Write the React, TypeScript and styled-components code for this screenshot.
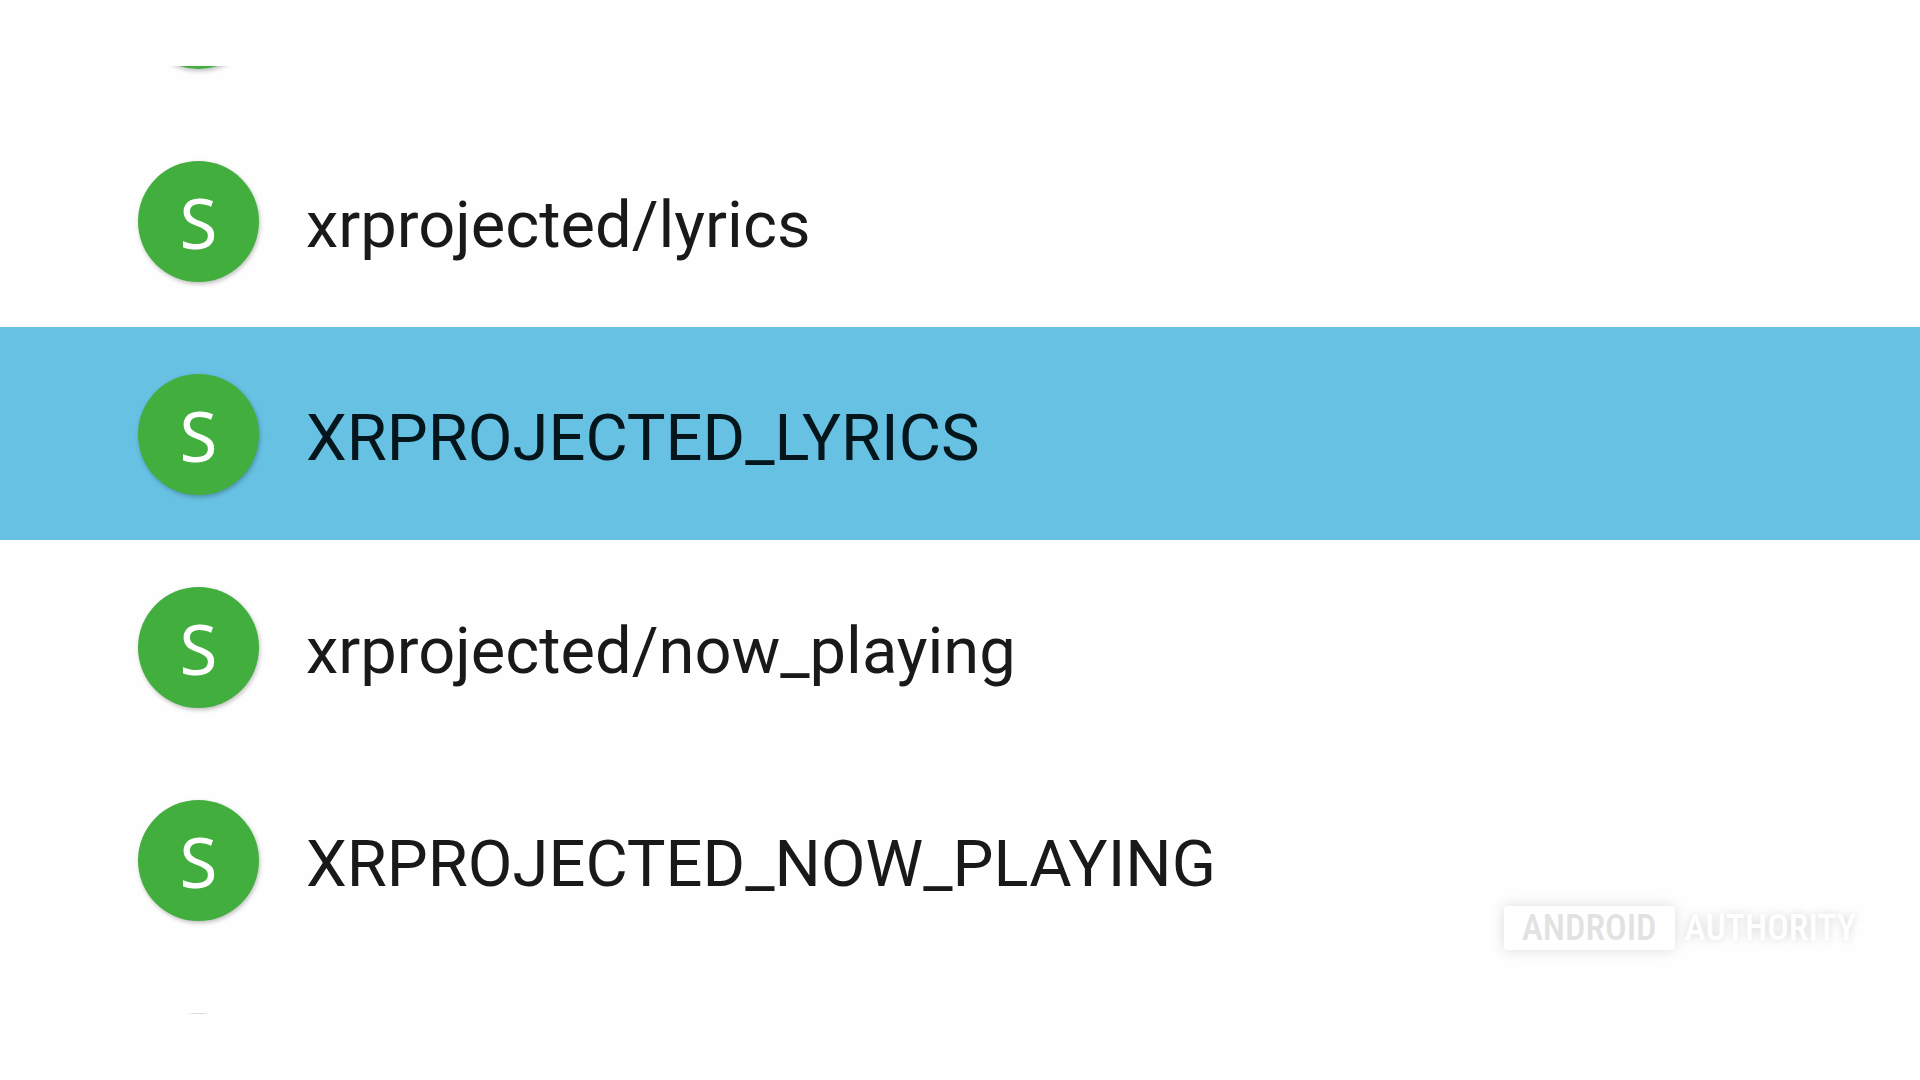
import React from "react";
import styled, { createGlobalStyle } from "styled-components";

const GlobalStyle = createGlobalStyle`
  *, *::before, *::after { box-sizing: border-box; }
  body {
    margin: 0;
    background: #fefefe;
    font-family: Roboto, "Liberation Sans", sans-serif;
  }
`;

const Page = styled.main`
  position: relative;
  height: 100vh;
  padding: 66px 0;
`;

const List = styled.ul`
  display: flex;
  flex-direction: column;
  justify-content: center;
  height: 100%;
  margin: 0;
  padding: 0;
  overflow: hidden;
  list-style: none;
`;

const Row = styled.li<{ $selected?: boolean }>`
  display: flex;
  flex: none;
  align-items: center;
  gap: 47px;
  height: 213px;
  padding: 2px 138px 0;
  color: ${(p) => (p.$selected ? "#04151b" : "#191919")};
  background: ${(p) => (p.$selected ? "#67c1e2" : "transparent")};
`;

const Avatar = styled.span<{ $muted?: boolean }>`
  display: flex;
  flex: none;
  align-items: center;
  justify-content: center;
  width: 121px;
  height: 121px;
  border-radius: 50%;
  background: ${(p) => (p.$muted ? "#d8d8d8" : "#41ae3e")};
  box-shadow: ${(p) => (p.$muted ? "none" : "1px 2px 4px rgba(0, 0, 0, 0.25)")};
  color: #ffffff;
  font-family: "Noto Sans", "Open Sans", sans-serif;
  font-size: 69px;
  line-height: 96px;
`;

const Label = styled.span`
  font-size: 65px;
  line-height: 76px;
  padding-top: 6px;
  white-space: nowrap;
`;

const Watermark = styled.div`
  position: absolute;
  right: 64px;
  bottom: 130px;
  display: flex;
  align-items: center;
  gap: 10px;
  color: #ffffff;
  font-family: "Roboto Condensed", Roboto, sans-serif;
  font-size: 36px;
  font-weight: 500;
  line-height: 44px;
  text-shadow: 0 0 8px rgba(0, 0, 0, 0.16);
`;

const WatermarkBox = styled.span`
  padding: 0 18px;
  border-radius: 4px;
  background: #ffffff;
  box-shadow: 0 0 14px rgba(0, 0, 0, 0.14);
  color: #e2e2e2;
  text-shadow: none;
`;

type Flag = { id: string; label?: string; selected?: boolean; muted?: boolean };

const flags: Flag[] = [
  { id: "previous" },
  { id: "lyrics-path", label: "xrprojected/lyrics" },
  { id: "lyrics", label: "XRPROJECTED_LYRICS", selected: true },
  { id: "now-playing-path", label: "xrprojected/now_playing" },
  { id: "now-playing", label: "XRPROJECTED_NOW_PLAYING" },
  { id: "next", muted: true },
];

export default function App() {
  return (
    <>
      <GlobalStyle />
      <Page>
        <List>
          {flags.map((flag) => (
            <Row key={flag.id} $selected={flag.selected}>
              <Avatar $muted={flag.muted}>{flag.label && "S"}</Avatar>
              {flag.label && <Label>{flag.label}</Label>}
            </Row>
          ))}
        </List>
        <Watermark>
          <WatermarkBox>ANDROID</WatermarkBox>
          <span>AUTHORITY</span>
        </Watermark>
      </Page>
    </>
  );
}
